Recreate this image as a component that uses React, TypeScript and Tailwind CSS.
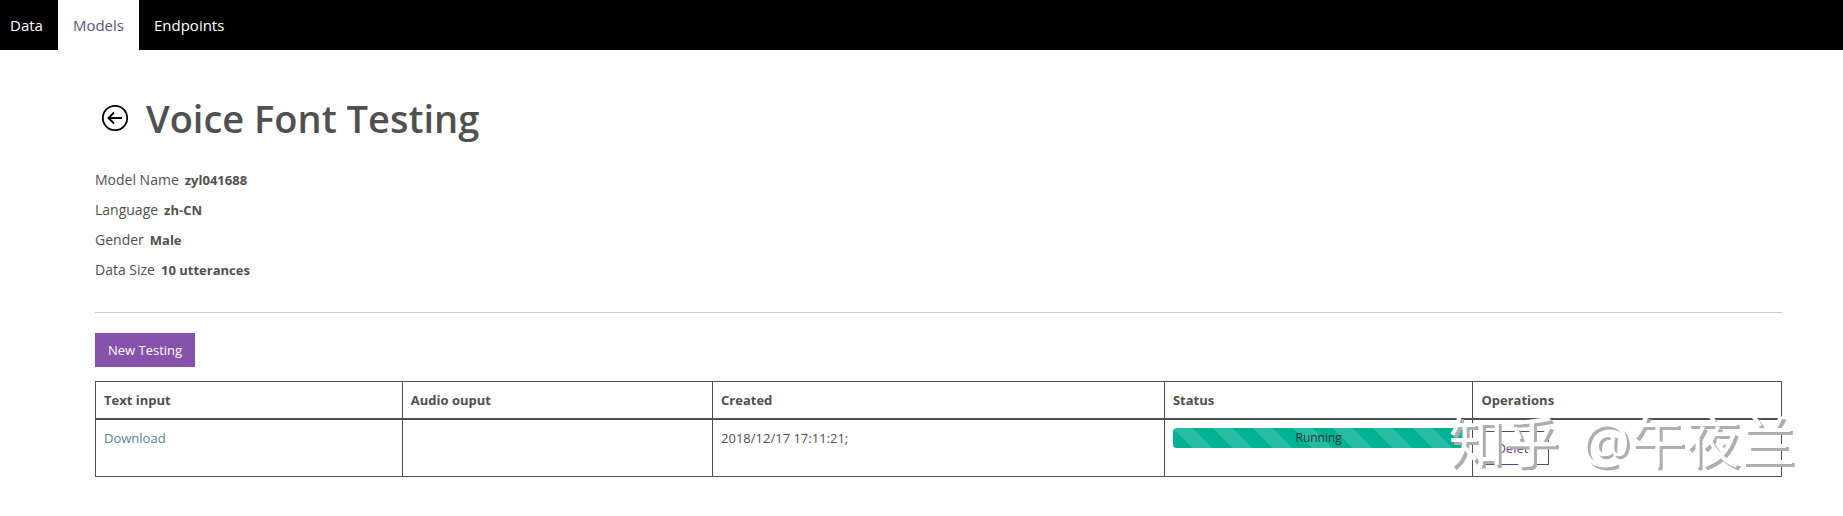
import React, { useState } from "react";

const tabs = ["Data", "Models", "Endpoints"];

const details = [
  { label: "Model Name", value: "zyl041688" },
  { label: "Language", value: "zh-CN" },
  { label: "Gender", value: "Male" },
  { label: "Data Size", value: "10 utterances" },
];

const columns = [
  { title: "Text input", width: "w-[18.2%]" },
  { title: "Audio ouput", width: "w-[18.4%]" },
  { title: "Created", width: "w-[26.8%]" },
  { title: "Status", width: "w-[18.3%]" },
  { title: "Operations", width: "w-[18.3%]" },
];

const tests = [{ created: "2018/12/17 17:11:21;", status: "Running" }];

const BackIcon: React.FC = () => (
  <svg width="28" height="28" viewBox="0 0 28 28" fill="none" stroke="#000">
    <circle cx="14" cy="14" r="12.2" strokeWidth="1.8" />
    <path d="M21 14H8M13 8.5L7.5 14L13 19.5" strokeWidth="1.8" />
  </svg>
);

const App: React.FC = () => {
  const [activeTab, setActiveTab] = useState("Models");

  return (
    <div className="relative font-['Open_Sans','Noto_Sans_CJK_SC',sans-serif] text-[13px] leading-5 text-[#505050]">
      <nav className="flex h-[50px] bg-black text-[15px]">
        {tabs.map((tab) => (
          <a
            key={tab}
            href="#"
            onClick={() => setActiveTab(tab)}
            className={`flex items-center px-[15px] first:pl-[10px] ${
              activeTab === tab ? "bg-white text-[#5c5679]" : "text-white"
            }`}
          >
            {tab}
          </a>
        ))}
      </nav>

      <main className="pt-10 pr-[61px] pl-[95px]">
        <div className="flex items-center gap-[17px] pl-[6px]">
          <button type="button" aria-label="Back">
            <BackIcon />
          </button>
          <h1 className="text-[38px] leading-[56px] font-semibold">
            Voice Font Testing
          </h1>
        </div>

        <dl className="mt-[19px]">
          {details.map((item) => (
            <div key={item.label} className="flex gap-[6px] leading-[30px]">
              <dt className="text-sm leading-[30px] font-medium">
                {item.label}
              </dt>
              <dd className="font-bold">{item.value}</dd>
            </div>
          ))}
        </dl>

        <hr className="mt-[27px] border-[#ccc]" />

        <button
          type="button"
          className="mt-5 h-[34px] bg-[#8553ab] px-[13px] text-white"
        >
          New Testing
        </button>

        <table className="mt-[14px] w-full table-fixed border-collapse border border-[#505050] text-left">
          <thead>
            <tr>
              {columns.map((column) => (
                <th
                  key={column.title}
                  className={`h-[37px] border border-b-2 border-[#505050] px-2 font-bold ${column.width}`}
                >
                  {column.title}
                </th>
              ))}
            </tr>
          </thead>
          <tbody>
            {tests.map((test) => (
              <tr key={test.created} className="align-top">
                <td className="border border-[#505050] p-2">
                  <a href="#" className="text-[#557fa5]">
                    Download
                  </a>
                </td>
                <td className="border border-[#505050] p-2" />
                <td className="border border-[#505050] p-2">{test.created}</td>
                <td className="border border-[#505050] p-2">
                  <div className="h-5 rounded bg-[#00b294] bg-[linear-gradient(45deg,rgba(255,255,255,.15)_25%,transparent_25%,transparent_50%,rgba(255,255,255,.15)_50%,rgba(255,255,255,.15)_75%,transparent_75%,transparent)] bg-[length:40px_40px] text-center text-xs leading-5 text-[#333]">
                    {test.status}
                  </div>
                </td>
                <td className="border border-[#505050] p-2">
                  <button
                    type="button"
                    className="my-[3px] ml-[2px] block h-[34px] border border-[#68437f] px-3 text-[#68437f]"
                  >
                    Delete
                  </button>
                </td>
              </tr>
            ))}
          </tbody>
        </table>
      </main>

      <div className="pointer-events-none absolute right-[48px] bottom-0 flex gap-[22px] text-[55px] leading-[72px] whitespace-nowrap text-white [text-shadow:3px_3px_0_#aeaeae]">
        <span>知乎</span>
        <span>@午夜兰</span>
      </div>
    </div>
  );
};

export default App;
